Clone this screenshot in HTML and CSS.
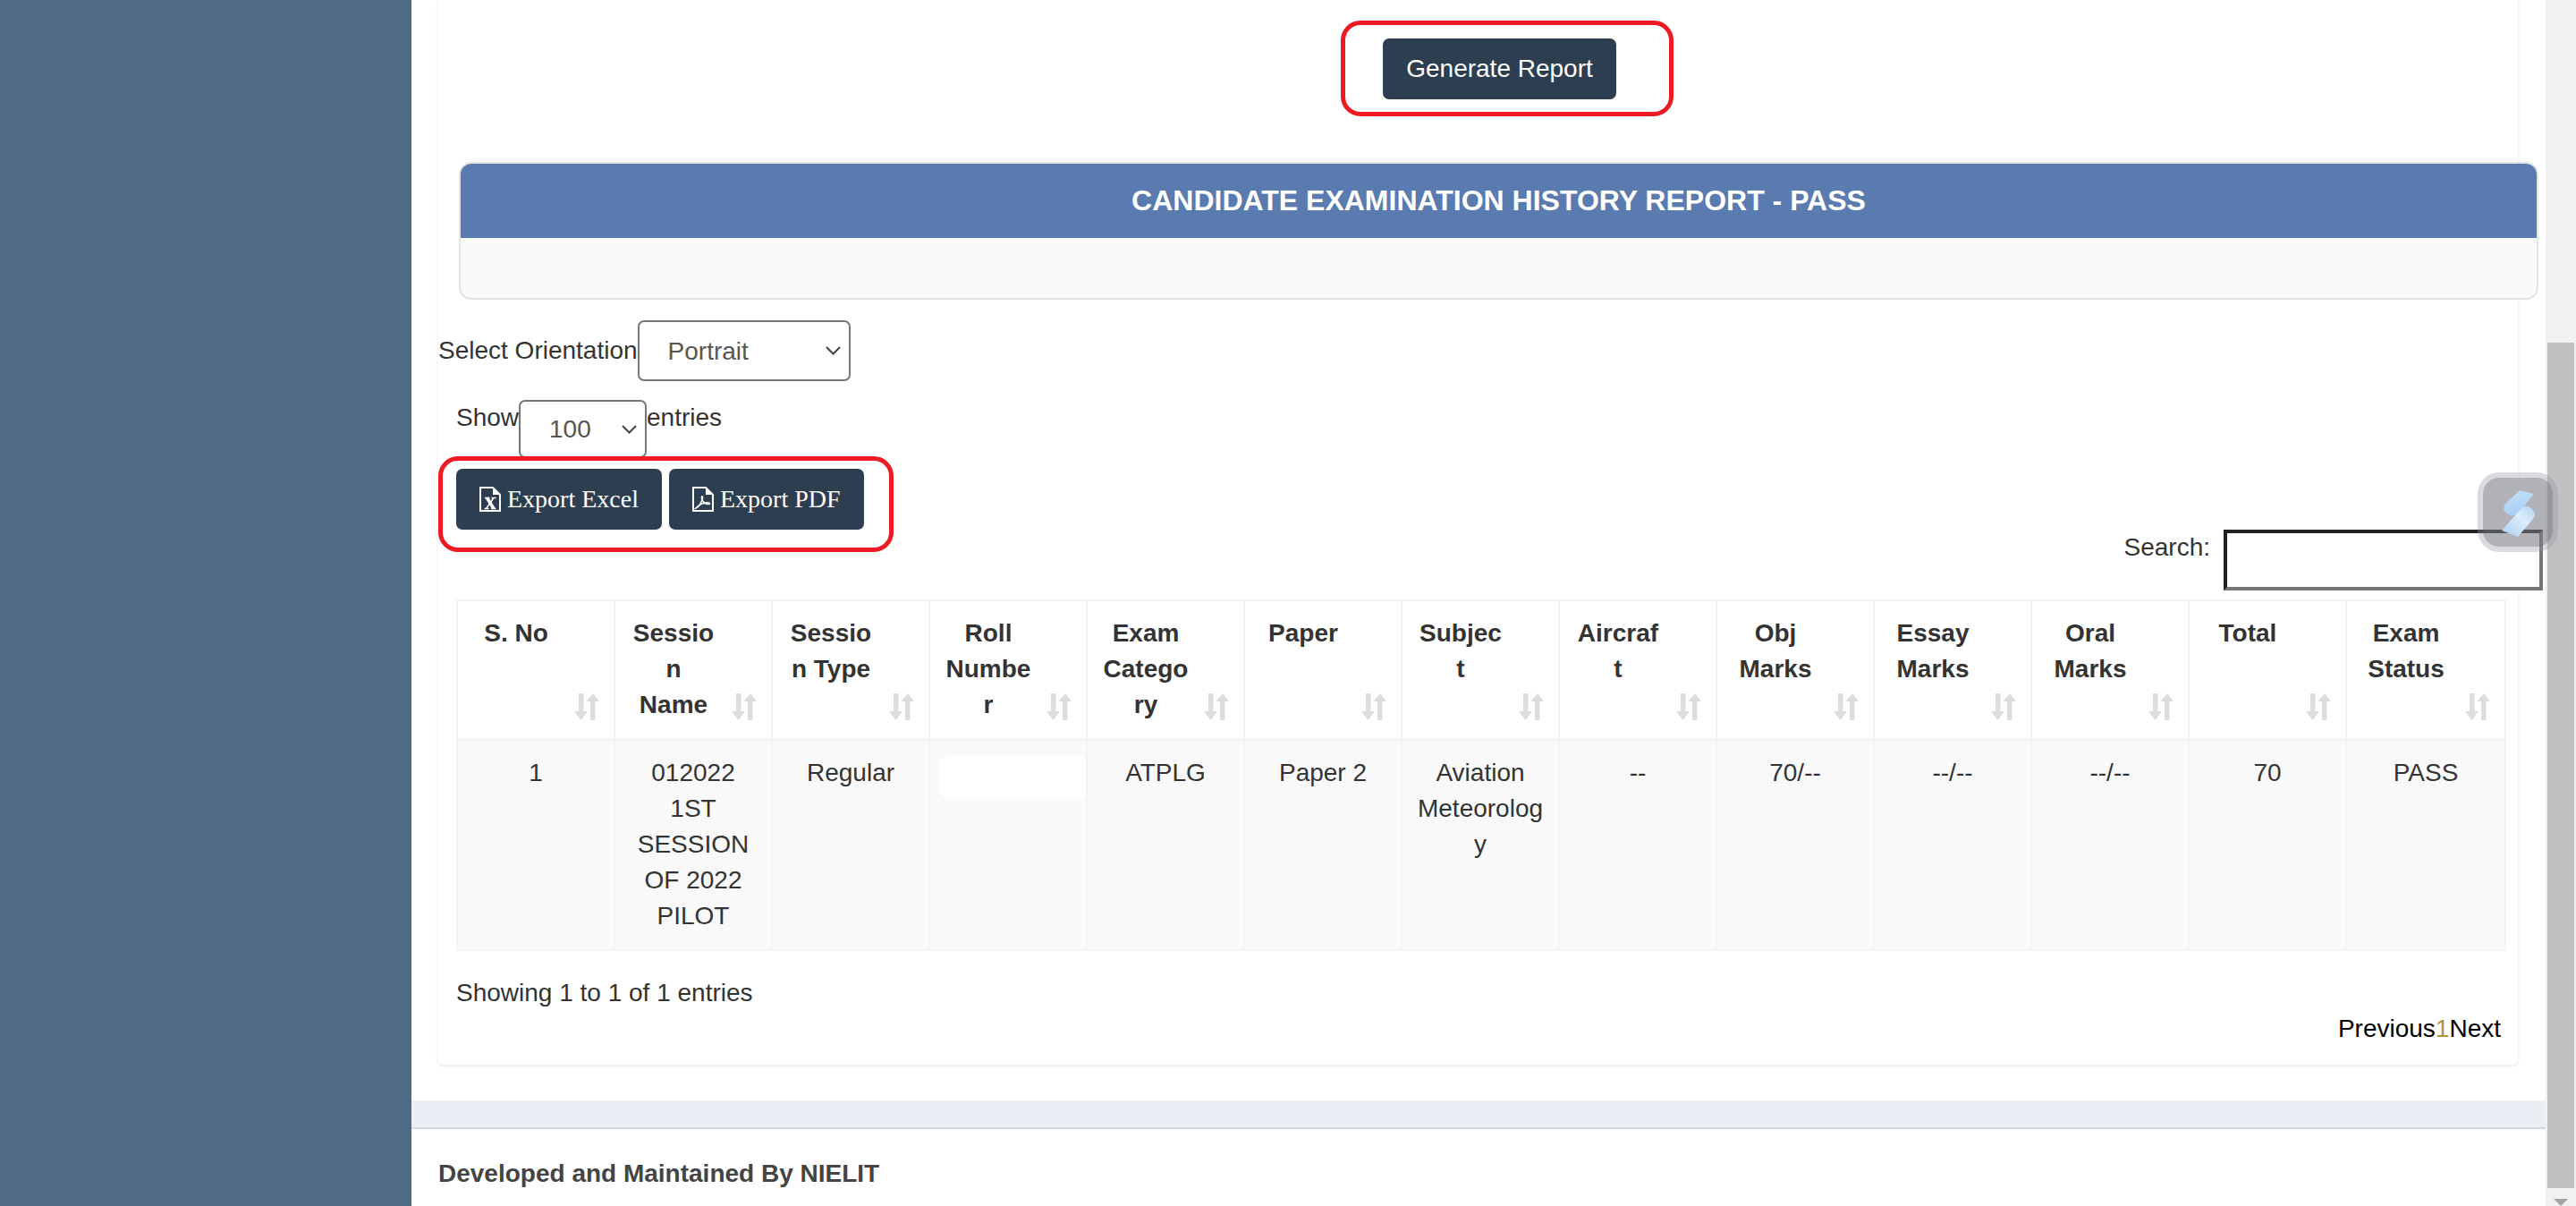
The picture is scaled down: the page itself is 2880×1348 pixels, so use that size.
FILE: index.html
```html
<!DOCTYPE html>
<html lang="en">
<head>
    <meta charset="UTF-8">
    <meta name="viewport" content="width=device-width, initial-scale=1.0">
    <title>Candidate Examination History Report</title>
    <link rel="stylesheet" href="styles.css">
</head>
<body>
    <svg class="defs" width="0" height="0">
        <symbol id="sort" viewBox="0 0 28 30">
            <path d="M5 0h5.500v20H15L7.500 30 0 20h5z"/>
            <path d="M21 0l7 9h-4.500v21H18V9h-4.500z"/>
        </symbol>
        <linearGradient id="logoTop" x1="0" y1="0" x2="0.3" y2="1">
            <stop offset="0" stop-color="#c4dff7"/>
            <stop offset="1" stop-color="#a9cff3"/>
        </linearGradient>
        <linearGradient id="logoBottom" x1="1" y1="0" x2="0" y2="1">
            <stop offset="0" stop-color="#b4d6f5"/>
            <stop offset="0.4" stop-color="#dcecfb"/>
            <stop offset="1" stop-color="#a8cef3"/>
        </linearGradient>
    </svg>

    <div class="page">
        <aside class="sidebar"></aside>

        <div class="main">
            <div class="card">
                <div class="mark mark-report">
                    <button type="button" class="btn btn-report">Generate Report</button>
                </div>

                <div class="panel">
                    <h3 class="panel-title">CANDIDATE EXAMINATION HISTORY REPORT - PASS</h3>
                    <div class="panel-body"></div>
                </div>

                <div class="orientation">
                    <label for="orientation">Select Orientation</label>
                    <select id="orientation" class="select select-orientation">
                        <option>Portrait</option>
                        <option>Landscape</option>
                    </select>
                </div>

                <div class="length">
                    <span>Show</span>
                    <select class="select select-length">
                        <option>100</option>
                    </select>
                    <span>entries</span>
                </div>

                <div class="mark mark-export">
                    <button type="button" class="btn btn-export">
                        <svg class="file-icon" viewBox="0 0 24 28">
                            <path class="file-line" d="M1 1h14l8 8v18H1z"/>
                            <path class="file-fold" d="M15 1v8h8z"/>
                            <path class="file-x-thick" d="M8.500 12.500l7.500 12"/>
                            <path class="file-x-thin" d="M16 12.500l-8.500 12M6 12.500h5.500M13.500 12.500h5M5.500 24.500h5M13 24.500h5.500"/>
                        </svg>
                        Export Excel
                    </button>
                    <button type="button" class="btn btn-export">
                        <svg class="file-icon" viewBox="0 0 24 28">
                            <path class="file-line" d="M1 1h14l8 8v18H1z"/>
                            <path class="file-fold" d="M15 1v8h8z"/>
                            <path class="file-pdf" d="M4 24c3-1 6-6 7.500-11 .5-2-.5-3-1-1.500-.5 2 1.500 5.500 3.500 7 2 1 5 1.500 5.500.5s-2-1.500-5-1-7 2-10.500 6z"/>
                        </svg>
                        Export PDF
                    </button>
                </div>

                <div class="search">
                    <label for="search">Search:</label>
                    <input type="search" id="search" class="search-input">
                </div>

                <table class="report">
                    <thead>
                        <tr>
                            <th>S. No<svg class="sort"><use href="#sort"/></svg></th>
                            <th>Session Name<svg class="sort"><use href="#sort"/></svg></th>
                            <th>Session Type<svg class="sort"><use href="#sort"/></svg></th>
                            <th>Roll Number<svg class="sort"><use href="#sort"/></svg></th>
                            <th>Exam Category<svg class="sort"><use href="#sort"/></svg></th>
                            <th>Paper<svg class="sort"><use href="#sort"/></svg></th>
                            <th>Subject<svg class="sort"><use href="#sort"/></svg></th>
                            <th>Aircraft<svg class="sort"><use href="#sort"/></svg></th>
                            <th>Obj Marks<svg class="sort"><use href="#sort"/></svg></th>
                            <th>Essay Marks<svg class="sort"><use href="#sort"/></svg></th>
                            <th>Oral Marks<svg class="sort"><use href="#sort"/></svg></th>
                            <th>Total<svg class="sort"><use href="#sort"/></svg></th>
                            <th>Exam Status<svg class="sort"><use href="#sort"/></svg></th>
                        </tr>
                    </thead>
                    <tbody>
                        <tr>
                            <td>1</td>
                            <td>012022 1ST SESSION OF 2022 PILOT</td>
                            <td>Regular</td>
                            <td><div class="redacted"></div></td>
                            <td>ATPLG</td>
                            <td>Paper 2</td>
                            <td>Aviation Meteorology</td>
                            <td>--</td>
                            <td>70/--</td>
                            <td>--/--</td>
                            <td>--/--</td>
                            <td>70</td>
                            <td>PASS</td>
                        </tr>
                    </tbody>
                </table>

                <div class="info">Showing 1 to 1 of 1 entries</div>

                <div class="paging">
                    <a href="#">Previous</a>
                    <a href="#" class="current">1</a>
                    <a href="#">Next</a>
                </div>
            </div>

            <div class="band"></div>
            <footer class="footer">Developed and Maintained By NIELIT</footer>
        </div>

        <div class="scrollbar">
            <div class="thumb"></div>
            <div class="scroll-end"><span class="arrow-down"></span></div>
        </div>
    </div>

    <div class="widget">
        <div class="widget-inner"></div>
        <svg class="widget-logo" viewBox="0 0 90 89">
            <path fill="url(#logoTop)" d="M47 20L63 24L47 44Q41 50 34 47Q26 42 31 35Z"/>
            <path fill="url(#logoBottom)" d="M50 39Q56 36 61 41Q66 47 62 52L45 72L27 65Z"/>
        </svg>
    </div>
</body>
</html>
```

FILE: styles.css
```css
* {
    box-sizing: border-box;
}

body {
    font-family: "Liberation Sans", Arial, sans-serif;
    font-size: 28px;
    line-height: 40px;
    color: #333;
    margin: 0;
    overflow: hidden;
}

.defs {
    display: block;
}

.page {
    display: flex;
    height: 1348px;
    overflow: hidden;
}

.sidebar {
    width: 460px;
    background-color: #4f6a85;
}

.main {
    width: 2386px;
    background-color: #fff;
}

.card {
    height: 1190px;
    margin: 0 30px 0 29px;
    padding-top: 23px;
    background-color: #fff;
    border-left: 1px solid #f7f7f7;
    border-right: 1px solid #f7f7f7;
    border-radius: 0 0 7px 7px;
    box-shadow: 0 2px 3px rgba(0, 0, 0, 0.08);
}

.mark {
    width: fit-content;
    border: 5px solid #ed1c24;
    border-radius: 22px;
}

.mark-report {
    margin-left: 1009px;
    padding: 15px 59px 14px 42px;
}

.mark-export {
    position: relative;
    width: 509px;
    margin-top: -2px;
    padding: 9px 0 20px 15px;
    display: flex;
    gap: 8px;
}

.btn {
    height: 68px;
    font-size: 28px;
    color: #fff;
    background-color: #2c3e50;
    border: none;
    border-radius: 7px;
}

.btn-report {
    width: 261px;
    font-family: "Liberation Sans", Arial, sans-serif;
}

.btn-export {
    display: flex;
    align-items: center;
    gap: 7px;
    padding: 0 26px;
    font-family: "Liberation Serif", "Times New Roman", serif;
}

.file-icon {
    width: 24px;
    height: 28px;
    flex-shrink: 0;
}

.file-line {
    fill: none;
    stroke: #fff;
    stroke-width: 2;
}

.file-fold {
    fill: #fff;
}

.file-x-thick {
    fill: none;
    stroke: #fff;
    stroke-width: 3.5;
}

.file-x-thin {
    fill: none;
    stroke: #fff;
    stroke-width: 1.5;
}

.file-pdf {
    fill: none;
    stroke: #fff;
    stroke-width: 1.6;
}

.panel {
    width: 2325px;
    margin: 51px 0 0 23px;
    background-color: #fafafa;
    border: 2px solid #e3e3e3;
    border-radius: 14px;
    overflow: hidden;
}

.panel-title {
    height: 83px;
    margin: 0;
    font-size: 32px;
    line-height: 82px;
    text-align: center;
    color: #fff;
    background-color: #5a7bb0;
}

.panel-body {
    height: 67px;
}

.orientation {
    display: flex;
    align-items: center;
    margin-top: 23px;
}

.select {
    font-family: "Liberation Sans", Arial, sans-serif;
    font-size: 28px;
    color: #555;
    padding: 0 0 0 32px;
    background-color: #fff;
    background-image: url("data:image/svg+xml,%3Csvg xmlns='http://www.w3.org/2000/svg' width='17' height='10'%3E%3Cpath d='M1 1l7.500 7.500L16 1' fill='none' stroke='%23444' stroke-width='2'/%3E%3C/svg%3E");
    background-repeat: no-repeat;
    background-position: right 9px center;
    border: 2px solid #767676;
    border-radius: 7px;
    appearance: none;
}

.select-orientation {
    width: 238px;
    height: 68px;
}

.select-length {
    width: 143px;
    height: 65px;
}

.length {
    display: flex;
    align-items: flex-start;
    height: 65px;
    margin: 21px 0 0 20px;
}

.search {
    position: relative;
    display: flex;
    justify-content: flex-end;
    margin: -25px -28px 0 0;
}

.search-input {
    width: 357px;
    height: 68px;
    margin-left: 15px;
    background-color: #fff;
    border-style: solid;
    border-width: 4px;
    border-color: #222 #767676 #767676 #222;
    appearance: none;
}

.report {
    width: 2292px;
    margin: 10px 0 0 20px;
    table-layout: fixed;
    border-collapse: collapse;
    border: 2px solid #f4f4f4;
}

.report th,
.report td {
    vertical-align: top;
    text-align: center;
    overflow-wrap: anywhere;
    border: 2px solid #f4f4f4;
}

.report th {
    position: relative;
    width: 176px;
    height: 156px;
    padding: 16px 61px 15px 17px;
    border-bottom-width: 4px;
}

.report th:last-child {
    width: auto;
}

.report td {
    padding: 15px 14px 17px;
    background-color: #f9f9f9;
}

.sort {
    position: absolute;
    right: 16px;
    bottom: 20px;
    width: 28px;
    height: 30px;
    fill: #ddd;
}

.redacted {
    width: 170px;
    height: 49px;
    margin-left: -4px;
    background-color: #fff;
    border-radius: 12px;
}

.info {
    margin: 27px 0 0 20px;
}

.paging {
    display: flex;
    justify-content: flex-end;
    margin-right: 19px;
}

.paging a {
    color: #000;
    text-decoration: none;
}

.paging a.current {
    color: #b8903b;
}

.band {
    height: 32px;
    margin-top: 40px;
    background-color: #ebeef4;
    border-bottom: 2px solid #d5d7e0;
}

.footer {
    padding: 30px 0 0 30px;
    font-weight: bold;
    color: #444;
}

.scrollbar {
    display: flex;
    flex-direction: column;
    width: 34px;
    padding-top: 383px;
    background-color: #f1f1f1;
}

.thumb {
    flex: 1;
    margin: 0 2px;
    background-color: #c1c1c1;
}

.scroll-end {
    display: flex;
    justify-content: center;
    height: 20px;
    padding-top: 12px;
}

.arrow-down {
    width: 0;
    height: 0;
    border-left: 8px solid transparent;
    border-right: 8px solid transparent;
    border-top: 8px solid #a3a3a3;
}

/* floating extension button, sits over the page */
.widget {
    position: fixed;
    left: 2770px;
    top: 528px;
    width: 90px;
    height: 89px;
    padding: 6px;
    background-color: rgba(150, 152, 170, 0.35);
    border-radius: 24px;
}

.widget-inner {
    width: 100%;
    height: 100%;
    background-color: rgba(105, 105, 115, 0.36);
    border-radius: 18px;
}

.widget-logo {
    position: absolute;
    left: 0;
    top: 0;
    width: 90px;
    height: 89px;
}
```
